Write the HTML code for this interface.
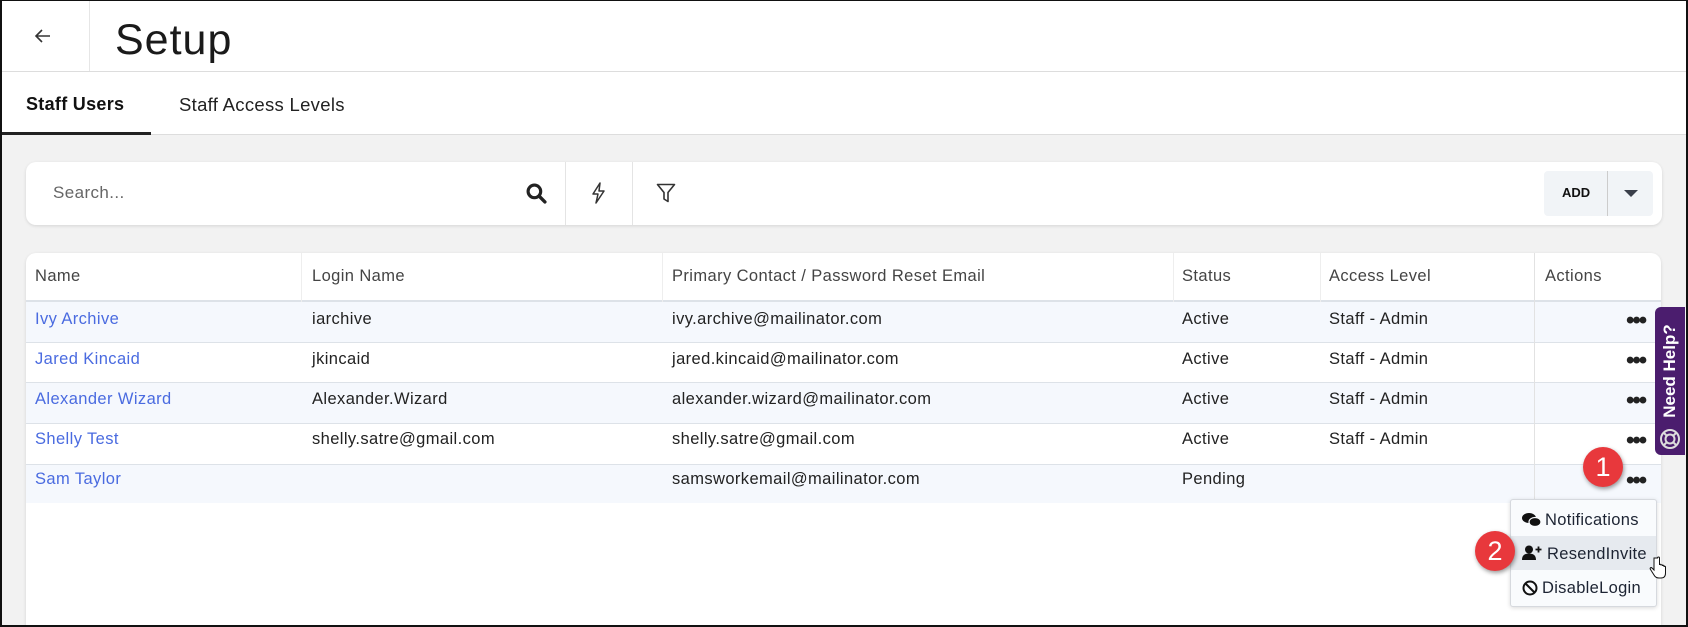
<!DOCTYPE html>
<html><head><meta charset="utf-8"><style>
*{box-sizing:border-box;margin:0;padding:0}
html,body{width:1688px;height:627px;overflow:hidden}
body{font-family:"Liberation Sans",sans-serif;background:#fff;position:relative;color:#222}
.frame{position:absolute;left:0;top:0;width:1688px;height:627px;border:2px solid #111;border-top:1px solid #111;pointer-events:none;z-index:50}
.hdr{position:absolute;left:0;top:0;width:1688px;height:72px;border-bottom:1px solid #ddd;background:#fff}
.vd{position:absolute;left:89px;top:0;width:1px;height:71px;background:#e6e6e6}
.title{position:absolute;left:115px;top:16px;font-size:43px;color:#1a1a1a;letter-spacing:1px}
.tabs{position:absolute;left:0;top:72px;width:1688px;height:63px;background:#fff;border-bottom:1px solid #ddd}
.tab{position:absolute;top:22px;font-size:18.5px;color:#222;letter-spacing:.3px}
.ul{position:absolute;left:0;top:60px;width:151px;height:3px;background:#222}
.gray{position:absolute;left:0;top:135px;width:1688px;height:492px;background:#f2f2f2}
.card{position:absolute;background:#fff;border-radius:10px;box-shadow:0 1px 3px rgba(0,0,0,.12)}
.t{position:absolute;font-size:16.5px;letter-spacing:.4px;white-space:nowrap}
.lnk{color:#4a6be0}
.row{position:absolute;left:26px;width:1635px;border-bottom:1px solid #dde2e8}
.dots{position:absolute;left:1626px;font-size:24px;font-weight:bold;letter-spacing:-2px;line-height:10px}
.badge{position:absolute;width:40px;height:40px;border-radius:50%;background:#e8383c;color:#fff;font-size:27px;text-align:center;line-height:40px;box-shadow:1px 2px 4px rgba(0,0,0,.4);z-index:10}
</style></head><body>
<div class="hdr"><div class="vd"></div>
<svg style="position:absolute;left:34px;top:27px" width="18" height="18" viewBox="0 0 18 18"><path d="M16 9H2M8 3L2 9l6 6" stroke="#333" stroke-width="1.6" fill="none"/></svg>
<div class="title">Setup</div></div>
<div class="tabs"><div class="tab" style="left:26px;color:#111;font-weight:bold;font-size:18px">Staff Users</div><div class="tab" style="left:179px">Staff Access Levels</div><div class="ul"></div></div>
<div class="gray"></div>
<div class="card" style="left:26px;top:162px;width:1636px;height:63px">
<div class="t" style="left:27px;top:21px;color:#666;font-size:17px">Search...</div>
<svg style="position:absolute;left:500px;top:21px" width="21" height="21" viewBox="0 0 20 20"><circle cx="8" cy="8" r="6" stroke="#222" stroke-width="3" fill="none"/><path d="M12.5 12.5L18 18" stroke="#222" stroke-width="3.2" stroke-linecap="round"/></svg>
<div style="position:absolute;left:539px;top:0;width:1px;height:63px;background:#e4e4e4"></div>
<svg style="position:absolute;left:565px;top:20px" width="16" height="22" viewBox="0 0 16 22"><path d="M9 1L2 12h5l-2 9 8-12H8z" stroke="#333" stroke-width="1.5" fill="none" stroke-linejoin="round"/></svg>
<div style="position:absolute;left:606px;top:0;width:1px;height:63px;background:#e4e4e4"></div>
<svg style="position:absolute;left:630px;top:21px" width="20" height="21" viewBox="0 0 20 21"><path d="M1.5 1.5h17l-6.5 8v9l-4-2.5v-6.5z" stroke="#333" stroke-width="1.6" fill="none" stroke-linejoin="round"/></svg>
<div style="position:absolute;left:1518px;top:9px;width:109px;height:45px;background:#f1f4f7;border-radius:4px">
<div class="t" style="left:18px;top:14px;font-size:13px;font-weight:bold;color:#111;letter-spacing:0">ADD</div>
<div style="position:absolute;left:63px;top:0;width:1px;height:45px;background:#ccc"></div>
<div style="position:absolute;left:80px;top:19px;border-left:7px solid transparent;border-right:7px solid transparent;border-top:7px solid #3a3f4a"></div></div>
</div>
<div class="card" style="left:26px;top:253px;width:1635px;height:374px;border-radius:10px 10px 0 0"></div>
<div class="row" style="top:253px;height:49px;border-bottom:2px solid #dde2e8"></div>
<div class="row" style="top:302px;height:41px;background:#f5f8fd"></div>
<div class="row" style="top:343px;height:40px"></div>
<div class="row" style="top:383px;height:41px;background:#f5f8fd"></div>
<div class="row" style="top:424px;height:41px"></div>
<div class="row" style="top:465px;height:38px;background:#f5f8fd;border-bottom:none"></div>
<div style="position:absolute;left:301px;top:253px;width:1px;height:49px;background:#eee"></div>
<div style="position:absolute;left:662px;top:253px;width:1px;height:49px;background:#eee"></div>
<div style="position:absolute;left:1173px;top:253px;width:1px;height:49px;background:#eee"></div>
<div style="position:absolute;left:1320px;top:253px;width:1px;height:49px;background:#eee"></div>
<div style="position:absolute;left:1534px;top:253px;width:1px;height:250px;background:#e2e2e2"></div>
<div class="t" style="left:35px;top:267px;color:#444">Name</div>
<div class="t" style="left:312px;top:267px;color:#444">Login Name</div>
<div class="t" style="left:672px;top:267px;color:#444">Primary Contact / Password Reset Email</div>
<div class="t" style="left:1182px;top:267px;color:#444">Status</div>
<div class="t" style="left:1329px;top:267px;color:#444">Access Level</div>
<div class="t" style="left:1545px;top:267px;color:#444">Actions</div>

<div class="t lnk" style="left:35px;top:310px">Ivy Archive</div><div class="t" style="left:312px;top:310px">iarchive</div><div class="t" style="left:672px;top:310px">ivy.archive@mailinator.com</div><div class="t" style="left:1182px;top:310px">Active</div><div class="t" style="left:1329px;top:310px">Staff - Admin</div>
<div class="t lnk" style="left:35px;top:350px">Jared Kincaid</div><div class="t" style="left:312px;top:350px">jkincaid</div><div class="t" style="left:672px;top:350px">jared.kincaid@mailinator.com</div><div class="t" style="left:1182px;top:350px">Active</div><div class="t" style="left:1329px;top:350px">Staff - Admin</div>
<div class="t lnk" style="left:35px;top:390px">Alexander Wizard</div><div class="t" style="left:312px;top:390px">Alexander.Wizard</div><div class="t" style="left:672px;top:390px">alexander.wizard@mailinator.com</div><div class="t" style="left:1182px;top:390px">Active</div><div class="t" style="left:1329px;top:390px">Staff - Admin</div>
<div class="t lnk" style="left:35px;top:430px">Shelly Test</div><div class="t" style="left:312px;top:430px">shelly.satre@gmail.com</div><div class="t" style="left:672px;top:430px">shelly.satre@gmail.com</div><div class="t" style="left:1182px;top:430px">Active</div><div class="t" style="left:1329px;top:430px">Staff - Admin</div>
<div class="t lnk" style="left:35px;top:470px">Sam Taylor</div><div class="t" style="left:672px;top:470px">samsworkemail@mailinator.com</div><div class="t" style="left:1182px;top:470px">Pending</div>
<div class="dots" style="top:316px">•••</div><div class="dots" style="top:356px">•••</div><div class="dots" style="top:396px">•••</div><div class="dots" style="top:436px">•••</div><div class="dots" style="top:476px">•••</div>

<div style="position:absolute;left:1655px;top:307px;width:30px;height:148px;background:#4b1d6e;border-radius:6px 0 0 6px;z-index:5">
<div style="position:absolute;left:-40px;top:54px;width:110px;transform:rotate(-90deg);color:#fff;font-weight:bold;font-size:17px;text-align:center">Need Help?</div>
<svg style="position:absolute;left:4px;top:121px" width="22" height="22" viewBox="0 0 22 22"><circle cx="11" cy="11" r="9" stroke="#ddd" stroke-width="2" fill="none"/><circle cx="11" cy="11" r="4.5" stroke="#ddd" stroke-width="2" fill="none"/><path d="M5 5l3 3M17 5l-3 3M5 17l3-3M17 17l-3-3" stroke="#ddd" stroke-width="2"/></svg></div>

<div style="position:absolute;left:1510px;top:499px;width:147px;height:108px;background:#f9fbfd;border:1px solid #d6d9de;border-radius:3px;box-shadow:0 1px 4px rgba(0,0,0,.15);z-index:6">
<div style="position:absolute;left:0;top:36px;width:145px;height:34px;background:#e6eaef"></div>
<svg style="position:absolute;left:11px;top:12px" width="20" height="16" viewBox="0 0 20 16"><ellipse cx="7" cy="6" rx="7" ry="5" fill="#111"/><ellipse cx="13" cy="10" rx="6" ry="4.5" fill="#111" stroke="#f9fbfd" stroke-width="1.2"/></svg>
<div class="t" style="left:34px;top:11px;font-size:16.5px;color:#1d2433;letter-spacing:.3px">Notifications</div>
<svg style="position:absolute;left:11px;top:45px" width="20" height="16" viewBox="0 0 20 16"><circle cx="7" cy="4.5" r="4" fill="#111"/><path d="M0 15c0-5 3-6.5 7-6.5s7 1.5 7 6.5z" fill="#111"/><path d="M16.5 1.5v6M13.5 4.5h6" stroke="#111" stroke-width="1.8"/></svg>
<div class="t" style="left:36px;top:45px;font-size:16.5px;color:#1d2433;letter-spacing:.3px">ResendInvite</div>
<svg style="position:absolute;left:11px;top:80px" width="16" height="16" viewBox="0 0 16 16"><circle cx="8" cy="8" r="6.5" stroke="#111" stroke-width="2" fill="none"/><path d="M3.5 3.5l9 9" stroke="#111" stroke-width="2"/></svg>
<div class="t" style="left:31px;top:79px;font-size:16.5px;color:#1d2433;letter-spacing:.3px">DisableLogin</div></div>
<svg style="position:absolute;left:1649px;top:556px;z-index:9" width="18" height="24" viewBox="0 0 18 24"><path d="M5 2v12l-2-2c-1-1-2.5 0-1.5 1.5L5 19c1 2 2.5 3 5 3h2c3 0 4.5-2 4.5-5v-6c0-1-1.5-1-1.5 0v-1c0-1-1.5-1-1.5 0v-.5c0-1-1.5-1-1.5 0V9c0-1-1.5-1-1.5 0V2c0-1.3-2-1.3-2 0z" fill="#fff" stroke="#111" stroke-width="1"/></svg>
<div class="badge" style="left:1583px;top:447px">1</div>
<div class="badge" style="left:1475px;top:531px">2</div>
<div class="frame"></div>
</body></html>
